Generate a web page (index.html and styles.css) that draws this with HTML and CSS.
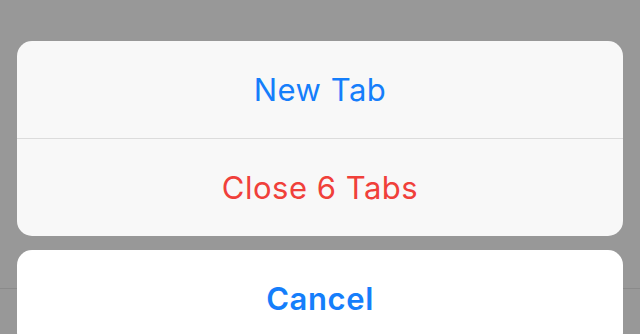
FILE: index.html
```html
<!DOCTYPE html>
<html lang="en">
<head>
<meta charset="utf-8">
<title>Action sheet</title>
<link rel="stylesheet" href="styles.css">
</head>
<body>
<div class="sheet">
  <div class="group">
    <div class="action action-default">New Tab</div>
    <div class="action action-destructive">Close 6 Tabs</div>
  </div>
  <div class="group group-cancel">
    <div class="action action-cancel">Cancel</div>
  </div>
</div>
</body>
</html>
```
FILE: styles.css
```css
html, body {
  margin: 0;
  padding: 0;
}
body {
  width: 640px;
  height: 334px;
  overflow: hidden;
  background: #989898 linear-gradient(to bottom, transparent 288px, #8a8a8a 288px, #8a8a8a 289px, transparent 289px);
  font-family: "Inter", "Roboto", "Liberation Sans", sans-serif;
}
.sheet {
  display: flex;
  flex-direction: column;
  gap: 14px;
  padding: 41px 17px 0;
}
.group {
  background: #f8f8f8;
  border-radius: 15px;
  overflow: hidden;
  display: flex;
  flex-direction: column;
}
.group-cancel {
  background: #ffffff;
}
.action {
  height: 97px;
  display: flex;
  align-items: center;
  justify-content: center;
  font-size: 31px;
  letter-spacing: 0.5px;
  color: #157efb;
}
.action + .action {
  border-top: 1px solid #dcdcdc;
}
.action-destructive {
  color: #f0403a;
}
.action-cancel {
  font-weight: 600;
  letter-spacing: 0.6px;
}
```
